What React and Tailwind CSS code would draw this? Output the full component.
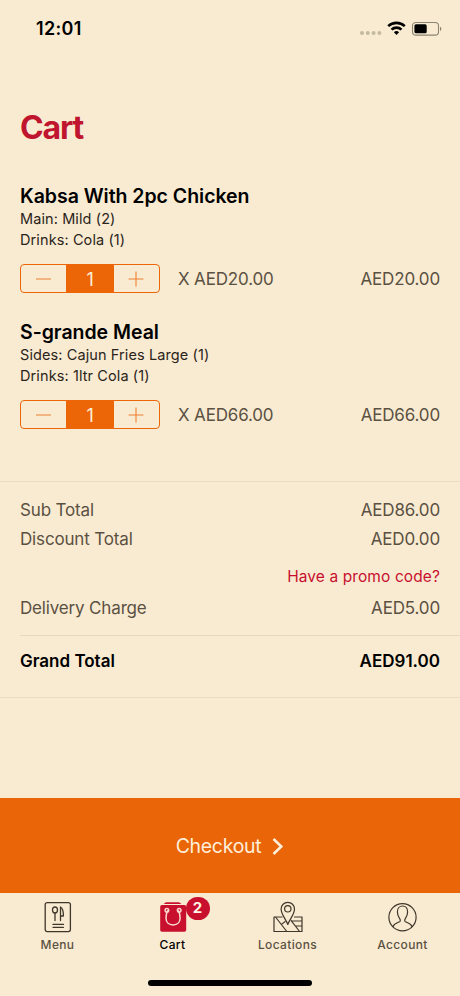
import React from "react";

const items = [
  { name: "Kabsa With 2pc Chicken", options: ["Main: Mild (2)", "Drinks: Cola (1)"], price: "AED20.00" },
  { name: "S-grande Meal", options: ["Sides: Cajun Fries Large (1)", "Drinks: 1ltr Cola (1)"], price: "AED66.00" },
];

function StatusBar() {
  return (
    <header className="flex h-[58px] items-center justify-between pl-9 pr-[18px]">
      <span className="text-[18px] font-semibold leading-none tracking-[0.3px] text-black">12:01</span>
      <svg width="84" height="18" viewBox="0 0 84 18" className="shrink-0">
        <g fill="#c4b9a1">
          <circle cx="4" cy="13" r="2" />
          <circle cx="9.8" cy="13" r="2" />
          <circle cx="15.6" cy="13" r="2" />
          <circle cx="21.4" cy="13" r="2" />
        </g>
        <g fill="none" stroke="#000" strokeWidth="2.6">
          <path d="M30.2 6.1a12.4 12.4 0 0 1 16.6 0" />
          <path d="M33.5 9.6a7.4 7.4 0 0 1 10 0" />
        </g>
        <path d="M38.5 15l-2.6-2.7a3.8 3.8 0 0 1 5.2 0z" fill="#000" />
        <rect x="54.5" y="2.5" width="26" height="12.6" rx="3.4" fill="none" stroke="#8c8370" strokeWidth="1.1" />
        <rect x="56.4" y="4.3" width="12.3" height="9" rx="1.6" fill="#000" />
        <path d="M82 6.8v4.2c1.8-.6 1.8-3.6 0-4.2z" fill="#8c8370" />
      </svg>
    </header>
  );
}

function Stepper() {
  return (
    <div className="flex h-[29px] w-[140px] overflow-hidden rounded-[4px] border border-[#ec6608]">
      <button className="flex w-[45px] items-center justify-center" aria-label="Decrease">
        <svg width="17" height="17" viewBox="0 0 17 17" stroke="#ec6608" strokeOpacity=".8" strokeWidth="1.1">
          <path d="M1 9h15" />
        </svg>
      </button>
      <div className="flex w-12 items-center justify-center bg-[#ec6608] pt-px text-[18px] text-[#fdeeda]">1</div>
      <button className="flex w-[45px] items-center justify-center" aria-label="Increase">
        <svg width="17" height="17" viewBox="0 0 17 17" stroke="#ec6608" strokeOpacity=".8" strokeWidth="1.1">
          <path d="M.5 9h15M8 1.5v15" />
        </svg>
      </button>
    </div>
  );
}

function CartItem({ item }) {
  return (
    <article className="h-[136px] px-5">
      <h2 className="h-6 text-[19.5px] font-semibold leading-6 tracking-[-0.03px] text-black">{item.name}</h2>
      {item.options.map((o) => (
        <p key={o} className="h-[21px] text-[14.5px] leading-[22px] tracking-[0.1px] text-[#2b241a]">{o}</p>
      ))}
      <div className="mt-[14px] flex items-start text-[17px] leading-[29px] tracking-[-0.16px] text-[#5b5142]">
        <Stepper />
        <span className="ml-[18px] pt-px">X {item.price}</span>
        <span className="ml-auto pt-px">{item.price}</span>
      </div>
    </article>
  );
}

function Row({ label, value }) {
  return (
    <div className="flex h-[29px] items-center justify-between text-[17px] tracking-[-0.16px] text-[#5b5142]">
      <span>{label}</span>
      <span>{value}</span>
    </div>
  );
}

function MenuIcon() {
  return (
    <svg width="32" height="34" viewBox="0 0 32 34" fill="none" stroke="#40372b" strokeWidth="1.3" strokeLinecap="round" strokeLinejoin="round">
      <rect x="3.2" y="2.6" width="25.2" height="29" rx="2" />
      <ellipse cx="13" cy="10" rx="2.5" ry="3" />
      <path d="M13 13v7.5M18.5 20.5V7c2 1 2.9 4 2.9 9h-2.9M11 24.4h10.5M11 27.3h10.5" />
    </svg>
  );
}

function CartIcon() {
  return (
    <span className="relative">
      <svg width="32" height="34" viewBox="0 0 32 34">
        <path d="M9 2.3h13l2.5 1.6H6.5z" fill="#c8102e" />
        <rect x="3.2" y="5" width="26" height="26.7" rx="1.8" fill="#c8102e" />
        <g fill="none" stroke="#fbd9cf" strokeWidth="1.5" strokeLinecap="round">
          <circle cx="9.9" cy="10.3" r="1.8" />
          <circle cx="22.2" cy="10.3" r="1.8" />
          <path d="M10.6 10.8C9.4 13 9 15.5 9 18c0 4.2 2.7 7 7.05 7s7.05-2.8 7.05-7c0-2.5-.4-5-1.6-7.2" />
        </g>
      </svg>
      <span className="absolute left-[29px] top-[-3px] flex h-[23px] w-6 items-center justify-center rounded-full bg-[#c8102e] text-[15px] font-bold text-[#fff3e4]">2</span>
    </span>
  );
}

function LocationsIcon() {
  return (
    <svg width="32" height="34" viewBox="0 0 32 34" fill="none" stroke="#40372b" strokeWidth="1.2" strokeLinejoin="round">
      <path d="M10.5 17H2v14.5h28V17h-8" />
      <path d="M15.8 24.5C14.4 19.6 9.1 14.8 9.1 9a6.7 6.7 0 0 1 13.4 0C22.5 14.8 17.2 19.6 15.8 24.5z" />
      <circle cx="15.8" cy="8.8" r="3.2" />
      <path d="M3.5 17L14.8 31.5M9.2 24.6l4.3-3.4M18.8 20.2L27.6 31.5M20 21H30M23.6 26H30" />
    </svg>
  );
}

function AccountIcon() {
  return (
    <svg width="32" height="34" viewBox="0 0 32 34" fill="none" stroke="#40372b" strokeWidth="1.2" strokeLinejoin="round">
      <circle cx="15.5" cy="17.3" r="13.6" />
      <path d="M5.8 27c1.2-3.7 4.5-4 6.8-5.2 1.3-.8.6-2.4-.2-3.6-1.2-1.8-2-3.8-2-6.2 0-3.8 2.1-6 5.1-6s5.1 2.2 5.1 6c0 2.4-.8 4.4-2 6.2-.8 1.2-1.5 2.8-.2 3.6 2.3 1.2 5.6 1.5 6.8 5.2" />
    </svg>
  );
}

const tabs = [
  { label: "Menu", Icon: MenuIcon },
  { label: "Cart", Icon: CartIcon, active: true },
  { label: "Locations", Icon: LocationsIcon },
  { label: "Account", Icon: AccountIcon },
];

export default function App() {
  return (
    <div className="flex h-[996px] w-[460px] flex-col overflow-hidden bg-[#f9ebd2] font-['Inter',sans-serif]">
      <StatusBar />
      <h1 className="mt-[50px] h-10 px-5 text-[32px] font-bold leading-10 tracking-[-1.1px] text-[#c0152f]">Cart</h1>
      <main className="mt-9 h-[297px]">
        {items.map((item) => (
          <CartItem key={item.name} item={item} />
        ))}
      </main>
      <section className="h-[217px] border-y border-[#eadcc4]">
        <div className="ml-5 h-[154px] border-b border-[#e6d8c1] pr-5 pt-[14px]">
          <Row label="Sub Total" value="AED86.00" />
          <Row label="Discount Total" value="AED0.00" />
          <div className="flex h-10 items-center justify-end pt-[6px] text-[15.5px] tracking-[0.1px] text-[#c8102e]">Have a promo code?</div>
          <Row label="Delivery Charge" value="AED5.00" />
        </div>
        <div className="flex h-[51px] items-center justify-between px-5 text-[17px] font-semibold text-black">
          <span>Grand Total</span>
          <span>AED91.00</span>
        </div>
      </section>
      <button className="mt-auto flex h-[95px] shrink-0 items-center justify-center gap-[11px] bg-[#e96507] pt-[2px] text-[19.5px] text-[#feeeda]">
        <span className="pt-px tracking-[-0.3px]">Checkout</span>
        <svg width="12" height="18" viewBox="0 0 12 18" fill="none" stroke="#feeeda" strokeWidth="2.6">
          <path d="M1.5 1L9.3 8.5l-7.8 7.5" />
        </svg>
      </button>
      <nav className="flex h-[103px] shrink-0 flex-col items-center">
        <div className="flex w-full pt-[7px]">
          {tabs.map(({ label, Icon, active }) => (
            <div key={label} className="flex flex-1 flex-col items-center">
              <span className="flex h-[34px]"><Icon /></span>
              <span className={`mt-[3px] text-[12px] font-medium leading-4 tracking-[0.35px] ${active ? "text-black" : "text-[#5b5142]"}`}>{label}</span>
            </div>
          ))}
        </div>
        <div className="mt-[27px] h-[6px] w-[164px] rounded-full bg-black" />
      </nav>
    </div>
  );
}
